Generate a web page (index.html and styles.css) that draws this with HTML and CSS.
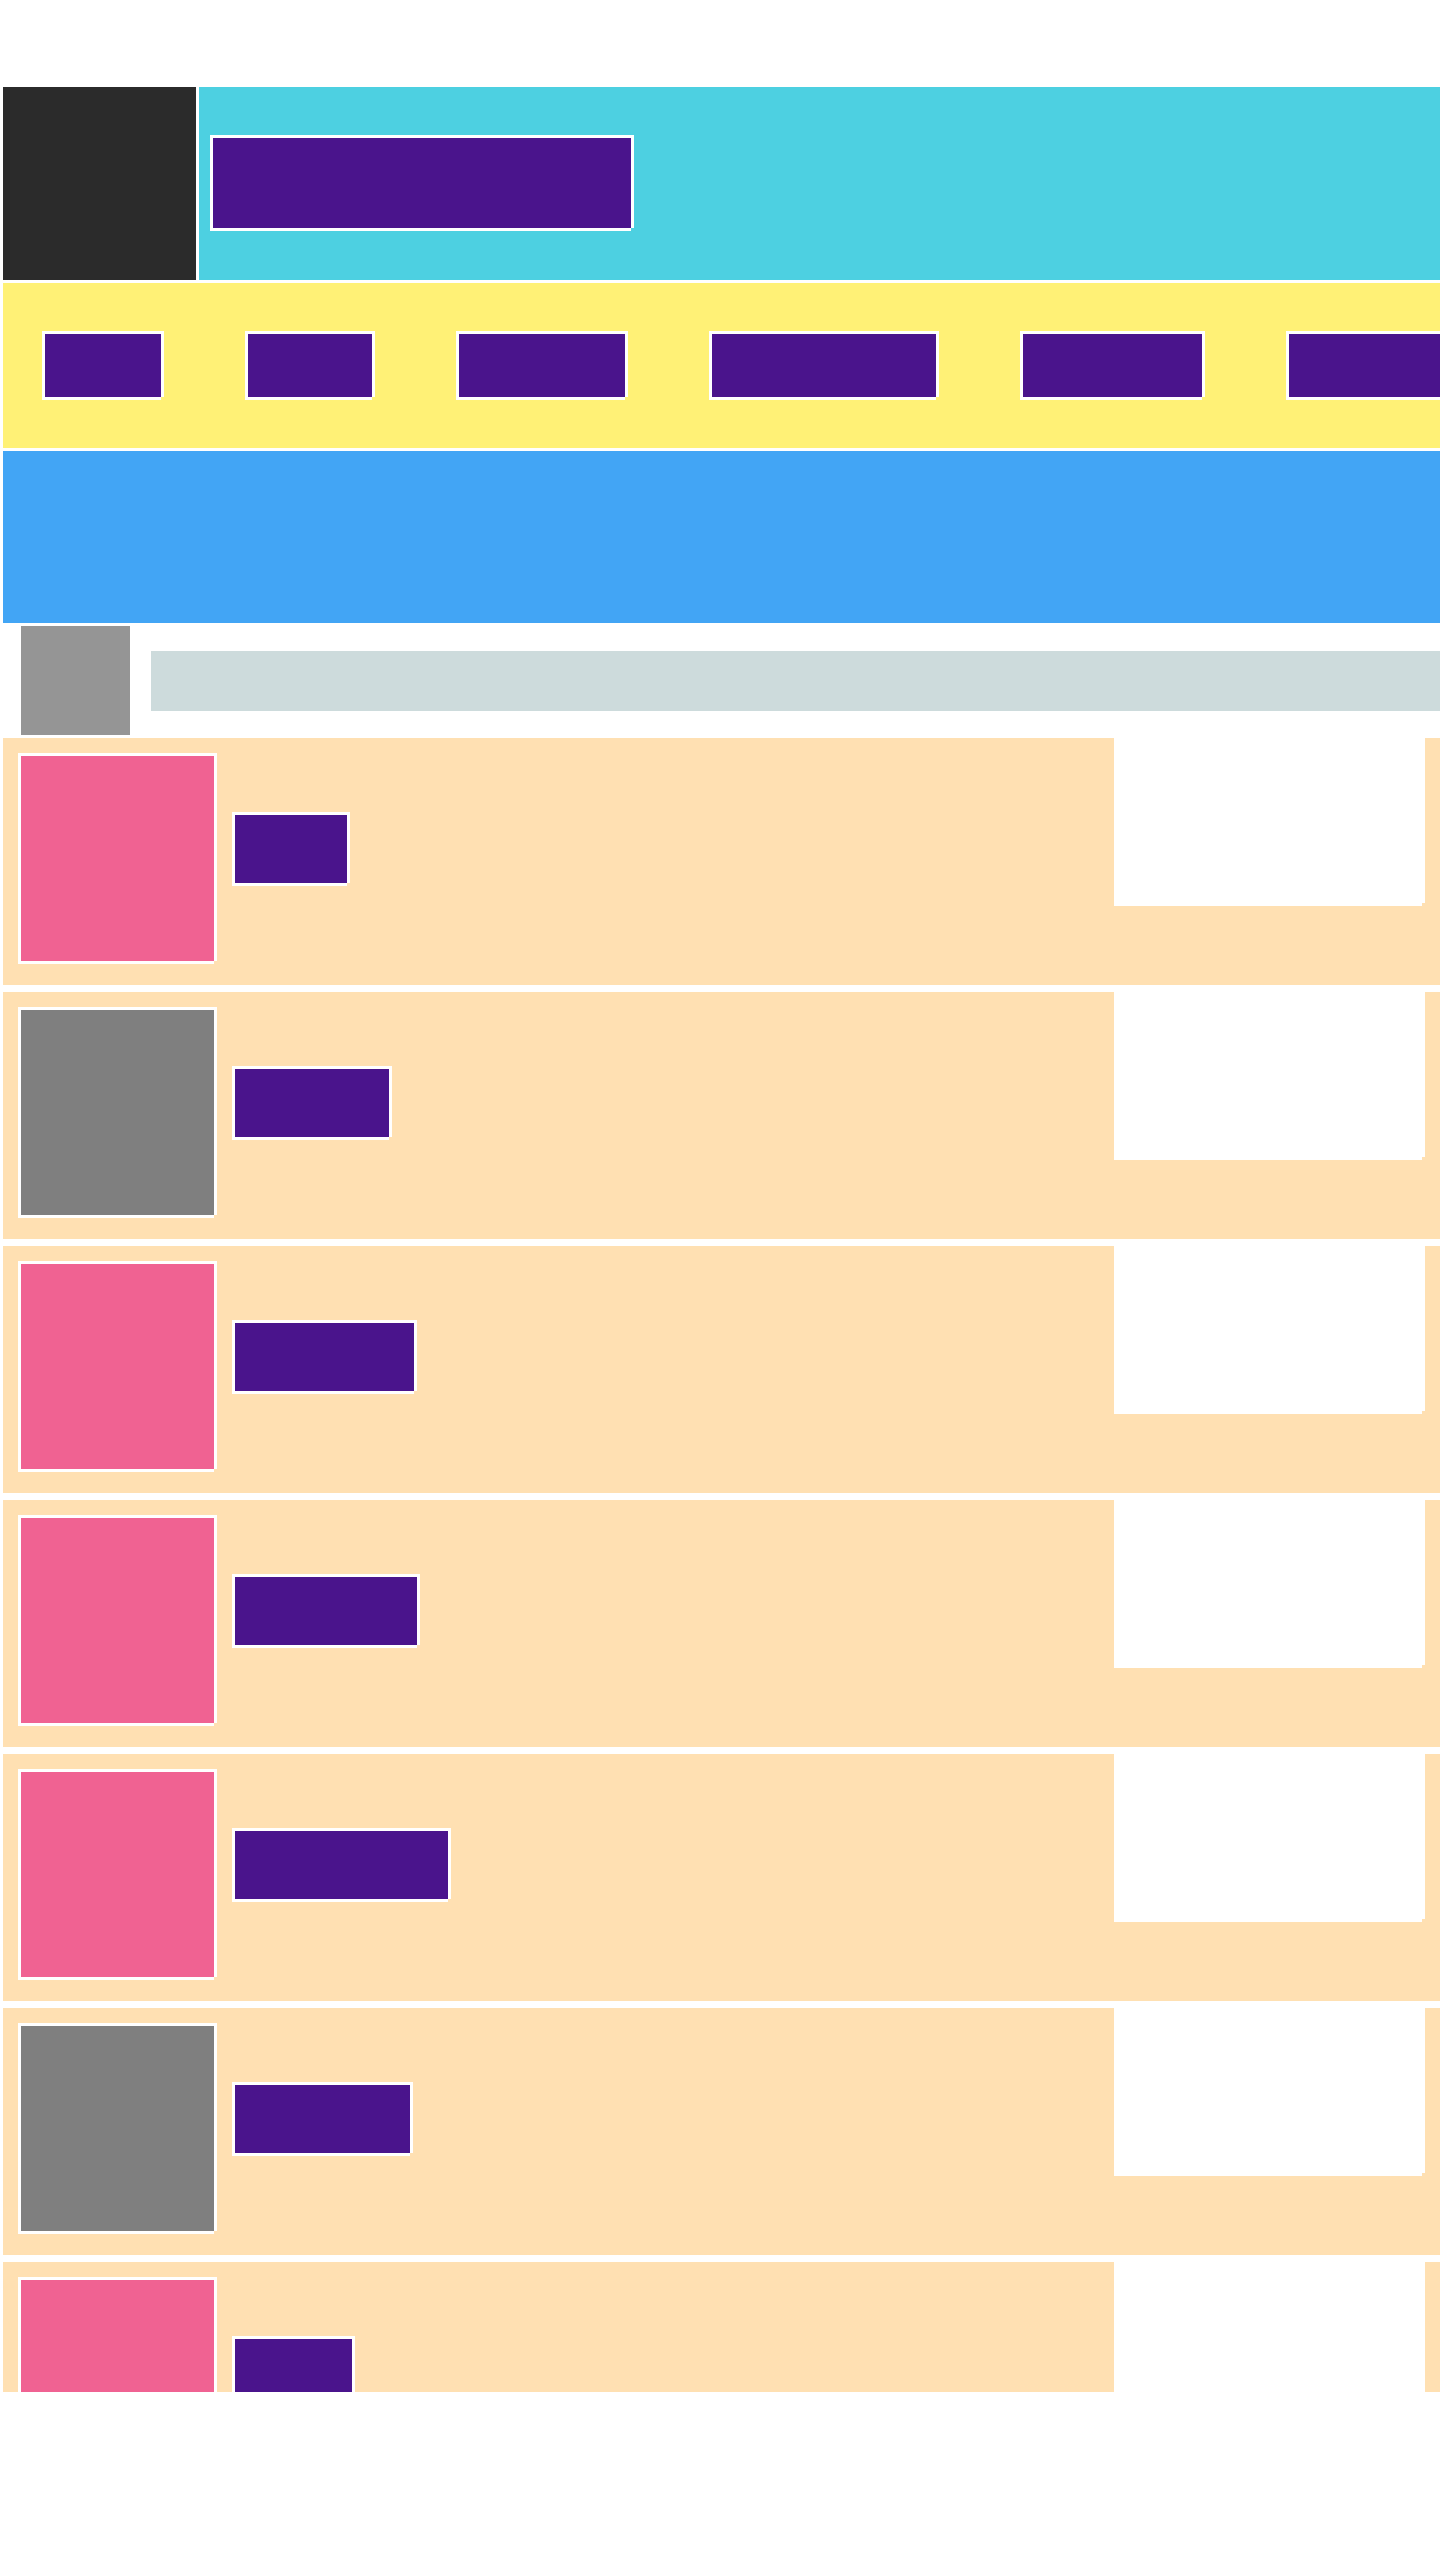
FILE: index.html
```html
<!DOCTYPE html>
<html lang="en">
<head>
<meta charset="utf-8">
<title>Layout</title>
<link rel="stylesheet" href="styles.css">
</head>
<body>
<div class="page">
  <header class="header">
    <div class="logo"></div>
    <div class="brand">
      <div class="title blk"></div>
    </div>
  </header>
  <nav class="nav">
    <div class="nav-item blk w116"></div>
    <div class="nav-item blk w124"></div>
    <div class="nav-item blk w166"></div>
    <div class="nav-item blk w224"></div>
    <div class="nav-item blk w179"></div>
    <div class="nav-item blk w170"></div>
  </nav>
  <section class="hero"></section>
  <div class="toolbar">
    <div class="avatar"></div>
    <div class="search"></div>
  </div>
  <main class="list">
    <article class="card">
      <div class="thumb blk pink"></div>
      <div class="label blk w112"></div>
      <div class="aside blk"></div>
    </article>
    <article class="card">
      <div class="thumb blk grey"></div>
      <div class="label blk w154"></div>
      <div class="aside blk"></div>
    </article>
    <article class="card">
      <div class="thumb blk pink"></div>
      <div class="label blk w179"></div>
      <div class="aside blk"></div>
    </article>
    <article class="card">
      <div class="thumb blk pink"></div>
      <div class="label blk w182"></div>
      <div class="aside blk"></div>
    </article>
    <article class="card">
      <div class="thumb blk pink"></div>
      <div class="label blk w213"></div>
      <div class="aside blk"></div>
    </article>
    <article class="card">
      <div class="thumb blk grey"></div>
      <div class="label blk w175"></div>
      <div class="aside blk"></div>
    </article>
    <article class="card">
      <div class="thumb blk pink"></div>
      <div class="label blk w117"></div>
      <div class="aside blk"></div>
    </article>
  </main>
</div>
</body>
</html>
```

FILE: styles.css
```css
html, body {
  margin: 0;
  padding: 0;
  background: #ffffff;
  overflow: hidden;
  font-family: "Liberation Sans", Arial, sans-serif;
}

.page {
  margin: 87px 0 0 3px;
  width: 1437px;
  height: 2305px;
  overflow: hidden;
  display: flex;
  flex-direction: column;
  gap: 3px;
}

/* white frame with a missing bottom-right corner */
.blk {
  flex-shrink: 0;
  box-shadow:
    -3px -3px 0 #ffffff,
    3px -3px 0 #ffffff,
    -3px 3px 0 #ffffff,
    3px 0 0 #ffffff,
    0 3px 0 #ffffff;
}

.header {
  display: flex;
  gap: 3px;
  height: 193px;
  flex-shrink: 0;
}

.logo {
  width: 193px;
  height: 193px;
  background: #2b2b2b;
  flex-shrink: 0;
}

.brand {
  flex: 1;
  background: #4dd0e1;
  display: flex;
  align-items: flex-start;
  padding: 51px 0 0 14px;
}

.title {
  width: 418px;
  height: 90px;
  background: #4a148c;
}

.nav {
  height: 165px;
  flex-shrink: 0;
  background: #fff176;
  display: flex;
  align-items: center;
  gap: 87px;
  padding-left: 42px;
  overflow: hidden;
}

.nav-item {
  height: 63px;
  background: #4a148c;
}

.w112 { width: 112px; }
.w116 { width: 116px; }
.w117 { width: 117px; }
.w124 { width: 124px; }
.w154 { width: 154px; }
.w166 { width: 166px; }
.w170 { width: 170px; }
.w175 { width: 175px; }
.w179 { width: 179px; }
.w182 { width: 182px; }
.w213 { width: 213px; }
.w224 { width: 224px; }

.hero {
  height: 172px;
  flex-shrink: 0;
  background: #42a5f5;
}

.toolbar {
  height: 109px;
  flex-shrink: 0;
  display: flex;
  align-items: center;
  gap: 21px;
  padding-left: 18px;
}

.avatar {
  width: 109px;
  height: 109px;
  background: #959595;
  flex-shrink: 0;
}

.search {
  flex: 1;
  height: 60px;
  background: #cddbdc;
}

.list {
  display: flex;
  flex-direction: column;
  gap: 7px;
}

.card {
  height: 247px;
  flex-shrink: 0;
  box-sizing: border-box;
  background: #ffe0b2;
  display: flex;
  align-items: flex-start;
  padding: 18px 18px 0 18px;
}

.thumb {
  width: 193px;
  height: 205px;
}

.pink { background: #f06292; }
.grey { background: #7f7f7f; }

.label {
  height: 68px;
  margin-top: 59px;
  margin-left: 21px;
  background: #4a148c;
}

.aside {
  width: 305px;
  height: 162px;
  margin-top: -15px;
  margin-left: auto;
  background: #ffffff;
}
```
